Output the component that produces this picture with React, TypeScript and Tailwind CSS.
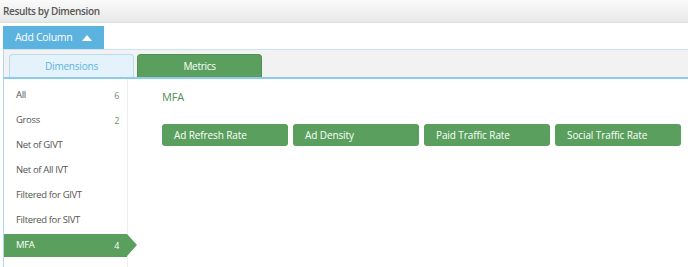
import React from "react";

const items: { label: string; count?: string }[] = [
  { label: "All", count: "6" },
  { label: "Gross", count: "2" },
  { label: "Net of GIVT" },
  { label: "Net of All IVT" },
  { label: "Filtered for GIVT" },
  { label: "Filtered for SIVT" },
];

const metrics = ["Ad Refresh Rate", "Ad Density", "Paid Traffic Rate", "Social Traffic Rate"];

export default function App() {
  return (
    <div
      className="w-[688px] h-[267px] bg-white overflow-hidden"
      style={{ fontFamily: '"Open Sans", "Noto Sans", sans-serif' }}
    >
      <div className="h-[23px] bg-gradient-to-b from-[#fafafa] to-[#e9e9e9] border-b border-[#d6e2e8] flex items-center pl-[3px]">
        <span className="text-[10px] font-semibold text-[#555] tracking-[-0.35px] whitespace-nowrap">Results by Dimension</span>
      </div>
      <div className="pl-[3px] pt-[3px]">
        <div className="w-[101px] h-[23px] bg-[#5cb3e0] flex items-center text-white text-[10.5px] tracking-[-0.3px] pl-[12px] whitespace-nowrap">
          <span>Add Column</span>
          <svg width="10" height="6" viewBox="0 0 10 6" className="ml-[10px]">
            <path d="M0 6 L5 0 L10 6 Z" fill="white" />
          </svg>
        </div>
        <div className="h-[30px] bg-[#f2f2f2] border-t border-[#c9e4f3] border-l border-l-[#a9d8f0] border-b-2 border-b-[#8ccbec] flex items-end pl-[5px] gap-[3px]">
          <div className="w-[125px] h-[23px] bg-[#e3f2fb] border border-[#b8dcf0] border-b-0 rounded-t-[4px] flex items-center justify-center text-[10px] tracking-[-0.2px] text-[#5cb3e0]">
            Dimensions
          </div>
          <div className="w-[125px] h-[23px] bg-[#5a9f5d] border border-[#4f9152] border-b-0 rounded-t-[4px] flex items-center justify-center text-[10px] tracking-[-0.3px] text-white">
            Metrics
          </div>
        </div>
        <div className="flex">
          <div className="w-[125px] border-l border-[#a9d8f0] border-r border-r-[#eeeeee] pt-[4px] h-[190px]">
            {items.map((it) => (
              <div key={it.label} className="h-[25px] flex items-center justify-between pl-[12px] pr-[8px] text-[9.5px] tracking-[-0.35px] text-[#555] whitespace-nowrap">
                <span>{it.label}</span>
                {it.count && <span className="text-[9px] text-[#6a8f6a]">{it.count}</span>}
              </div>
            ))}
            <div className="relative h-[23px] mt-[1px] bg-[#5a9f5d] flex items-center justify-between pl-[12px] pr-[8px] text-[9.5px] tracking-[-0.35px] text-white">
              <span>MFA</span>
              <span className="text-[9px]">4</span>
              <div className="absolute right-[-10px] top-0 w-0 h-0 border-t-[11.5px] border-b-[11.5px] border-l-[10px] border-t-transparent border-b-transparent border-l-[#5a9f5d]" />
            </div>
          </div>
          <div className="flex-1 pl-[34px] pt-[9px]">
            <div className="text-[11px] tracking-[-0.2px] text-[#4f8f52] h-[18px] leading-[18px]">MFA</div>
            <div className="flex gap-[5px] mt-[18px]">
              {metrics.map((m) => (
                <div key={m} className="w-[126px] shrink-0 h-[22px] bg-[#5a9f5d] rounded-[3px] flex items-center pl-[12px] text-[10px] tracking-[-0.1px] text-white whitespace-nowrap">
                  {m}
                </div>
              ))}
            </div>
          </div>
        </div>
      </div>
    </div>
  );
}
